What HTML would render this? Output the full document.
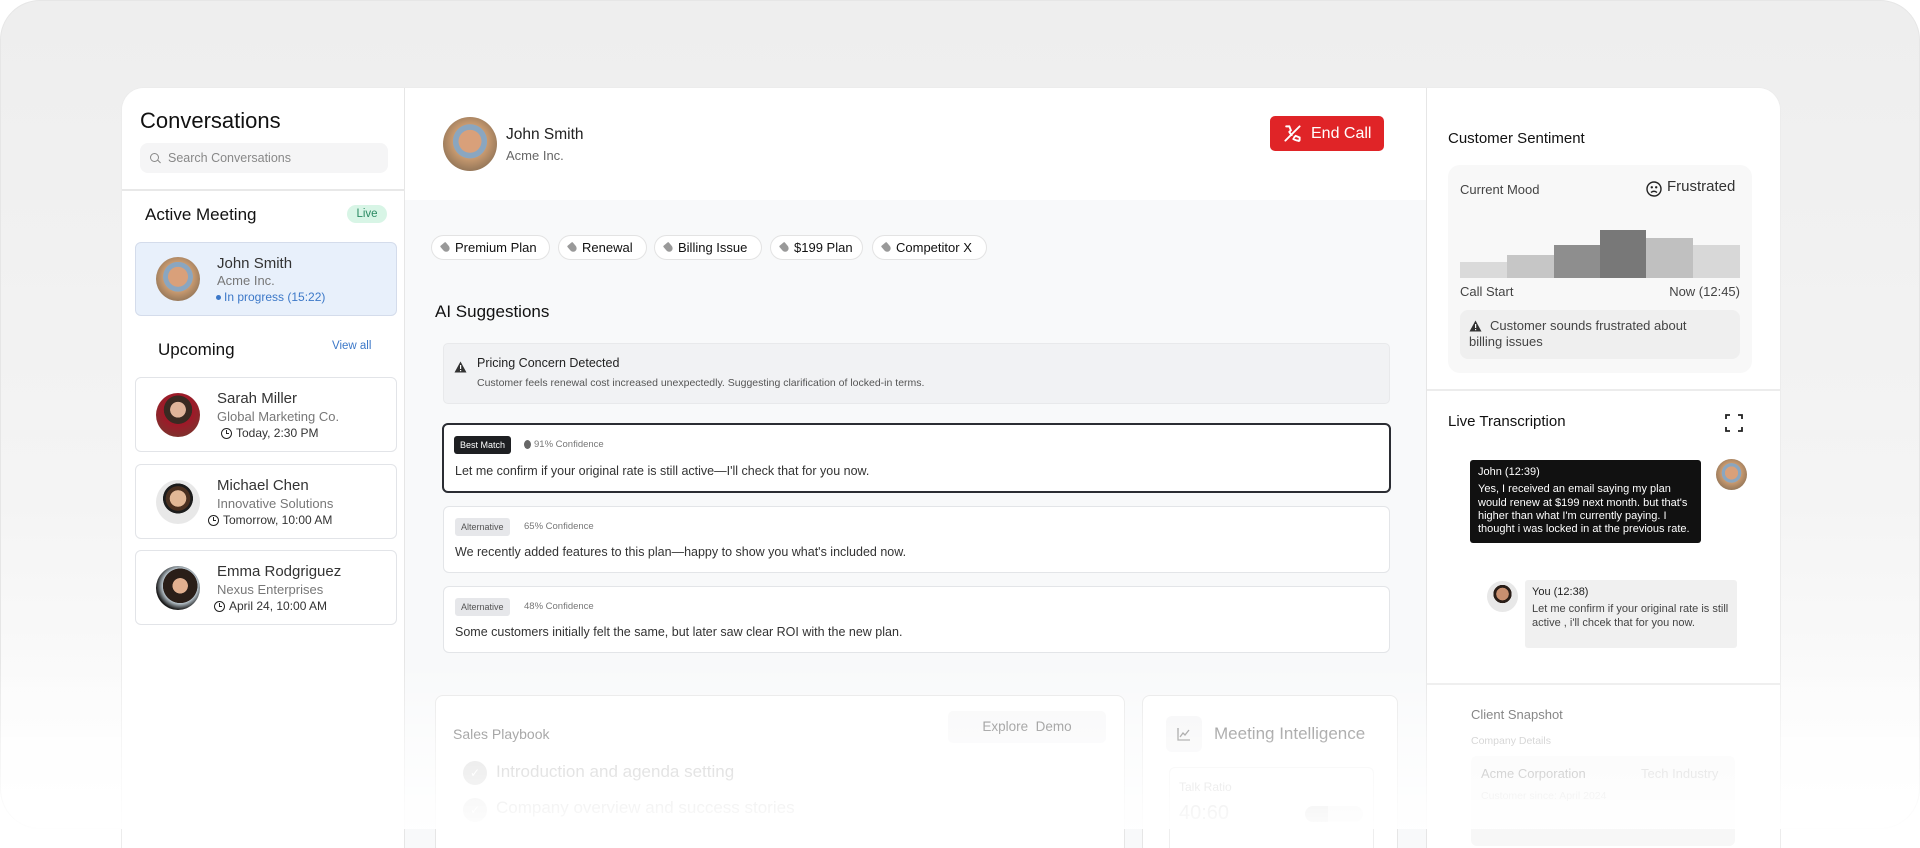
<!DOCTYPE html>
<html><head><meta charset="utf-8"><style>
*{box-sizing:border-box;margin:0;padding:0}
body{width:1920px;height:829px;overflow:hidden;background:#fff;font-family:"Liberation Sans",Arial,sans-serif;color:#111;position:relative}
.frame{position:absolute;left:0;top:0;width:1920px;height:829px;border-radius:40px;border:1px solid #e6e6e6;background:linear-gradient(#eeeeee 0,#f4f4f4 60%,#ffffff 100%)}
.app{position:absolute;left:122px;top:88px;width:1658px;height:760px;background:#fff;border-radius:22px 22px 0 0;overflow:hidden;box-shadow:0 0 0 1px #ececec}
.abs{position:absolute}
.side{left:0;top:0;width:283px;height:760px;border-right:1px solid #e6e6e6;background:#fff}
.center{left:283px;top:0;width:1021px;height:760px;background:#f8f9fa;overflow:hidden}
.right{left:1304px;top:0;width:354px;height:760px;border-left:1px solid #e6e6e6;background:#fff}
.card{position:absolute;left:13px;width:262px;border:1.5px solid #e2e4e8;border-radius:6px;background:#fff}
.av{position:absolute;border-radius:50%}
.nm{position:absolute;left:81px;font-size:15px;color:#333}
.co{position:absolute;left:81px;font-size:13px;color:#777}
.tm{position:absolute;font-size:12px;color:#333;display:flex;align-items:center;gap:4px}
.clk{width:11px;height:11px;border:1.5px solid #222;border-radius:50%;position:relative;display:inline-block}
.clk:after{content:"";position:absolute;left:3.5px;top:1px;width:2.5px;height:3px;border-left:1.5px solid #222;border-bottom:1.5px solid #222}
.tag{position:absolute;top:147px;height:25px;border:1px solid #e3e3e3;border-radius:13px;background:#fff;font-size:13px;color:#111;display:flex;align-items:center;padding-left:10px;gap:6px;white-space:nowrap}
.tag i{width:7px;height:9px;background:#999;border-radius:1px 1px 4px 4px;transform:rotate(-40deg);display:inline-block}
.sug{position:absolute;left:38px;width:947px;background:#fff;border:1.5px solid #e3e5e8;border-radius:6px}
.badge{position:absolute;left:12px;top:13px;height:18px;padding:0 6px;font-size:9px;line-height:18px;border-radius:3px;background:#e6e7ea;color:#555}
.conf{position:absolute;top:16px;font-size:9.5px;color:#777}
.stx{position:absolute;left:12px;font-size:12.5px;color:#333}
</style></head><body>
<div class="frame"></div>
<div class="app">
 <div class="abs side">
  <div class="abs" style="left:18px;top:20px;font-size:22px;color:#111">Conversations</div>
  <div class="abs" style="left:18px;top:55px;width:248px;height:30px;background:#f5f5f6;border-radius:8px">
   <div class="abs" style="left:10px;top:10px;width:9px;height:9px;border:1.4px solid #888;border-radius:50%"></div>
   <div class="abs" style="left:17px;top:18px;width:4px;height:1.4px;background:#888;transform:rotate(45deg)"></div>
   <div class="abs" style="left:28px;top:8px;font-size:12.5px;color:#888">Search Conversations</div>
  </div>
  <div class="abs" style="left:0;top:101px;width:283px;height:2px;background:#e8e8e8"></div>
  <div class="abs" style="left:23px;top:117px;font-size:17px;color:#111">Active Meeting</div>
  <div class="abs" style="left:225px;top:117px;width:40px;height:18px;border-radius:9px;background:#d8f5e6;color:#2b8a63;font-size:11.5px;text-align:center;line-height:18px">Live</div>
  <div class="card" style="top:154px;height:74px;background:#e8f0fb;border-color:#d4dceb">
   <div class="av" style="left:20px;top:14px;width:44px;height:44px;background:radial-gradient(circle at 50% 45%,#d9a07a 0 30%,#8aa6c0 31% 45%,#c89a70 46%,#6b5a46 100%)"></div>
   <div class="nm" style="top:12px">John Smith</div>
   <div class="co" style="top:30px">Acme Inc.</div>
   <div class="abs" style="left:80px;top:52px;width:5px;height:5px;border-radius:50%;background:#3c78c8"></div>
   <div class="abs" style="left:88px;top:47px;font-size:12px;color:#3c78c8">In progress (15:22)</div>
  </div>
  <div class="abs" style="left:36px;top:252px;font-size:17px;color:#111">Upcoming</div>
  <div class="abs" style="left:210px;top:252px;font-size:11.5px;color:#3c78c8">View all</div>
  <div class="card" style="top:289px;height:75px">
   <div class="av" style="left:20px;top:15px;width:44px;height:44px;background:radial-gradient(circle at 50% 38%,#e0b49a 0 22%,#3a2a22 23% 40%,#a01828 41%,#6a4030 100%)"></div>
   <div class="nm" style="top:12px">Sarah Miller</div>
   <div class="co" style="top:31px">Global Marketing Co.</div>
   <div class="tm" style="left:85px;top:48px"><span class="clk"></span>Today, 2:30 PM</div>
  </div>
  <div class="card" style="top:376px;height:75px">
   <div class="av" style="left:20px;top:15px;width:44px;height:44px;background:radial-gradient(circle at 50% 42%,#e2b896 0 24%,#4a3020 25% 36%,#1c1c1c 37% 44%,#e8e8e8 45%)"></div>
   <div class="nm" style="top:12px">Michael Chen</div>
   <div class="co" style="top:31px">Innovative Solutions</div>
   <div class="tm" style="left:72px;top:48px"><span class="clk"></span>Tomorrow, 10:00 AM</div>
  </div>
  <div class="card" style="top:462px;height:75px">
   <div class="av" style="left:20px;top:15px;width:44px;height:44px;background:radial-gradient(circle at 55% 45%,#e2b090 0 22%,#2a1e18 23% 50%,#b8c4cc 51%,#1a1a1a 70%)"></div>
   <div class="nm" style="top:12px">Emma Rodgriguez</div>
   <div class="co" style="top:31px">Nexus Enterprises</div>
   <div class="tm" style="left:78px;top:48px"><span class="clk"></span>April 24, 10:00 AM</div>
  </div>
 </div>

 <div class="abs center">
  <div class="abs" style="left:0;top:0;width:1021px;height:112px;background:#fff"></div>
  <div class="av" style="left:38px;top:29px;width:54px;height:54px;background:radial-gradient(circle at 50% 45%,#d9a07a 0 28%,#8aa6c0 29% 42%,#c89a70 43%,#6b5a46 100%)"></div>
  <div class="abs" style="left:101px;top:38px;font-size:15.5px;color:#222">John Smith</div>
  <div class="abs" style="left:101px;top:60px;font-size:13px;color:#666">Acme Inc.</div>
  <div class="abs" style="left:865px;top:28px;width:114px;height:35px;background:#e02427;border-radius:5px;color:#fff;font-size:16px;line-height:35px;padding-left:41px">End Call
   <svg class="abs" style="left:13px;top:8px" width="19" height="19" viewBox="0 0 24 24" fill="none" stroke="#fff" stroke-width="2.4" stroke-linecap="round"><path d="M4 3l4 0 2 5-2 2c1 2 2 3 3 4"/><path d="M14 17l2-2 5 2v3c0 1-1 2-2 1-2 0-4-1-6-2"/><path d="M21 3L3 21"/></svg>
  </div>
  <div class="tag" style="left:26px;width:119px"><i></i>Premium Plan</div>
  <div class="tag" style="left:153px;width:89px"><i></i>Renewal</div>
  <div class="tag" style="left:249px;width:108px"><i></i>Billing Issue</div>
  <div class="tag" style="left:365px;width:93px"><i></i>$199 Plan</div>
  <div class="tag" style="left:467px;width:115px"><i></i>Competitor X</div>
  <div class="abs" style="left:30px;top:214px;font-size:17px;color:#111">AI Suggestions</div>
  <div class="abs" style="left:38px;top:255px;width:947px;height:61px;background:#f1f2f4;border:1px solid #e8e9eb;border-radius:5px">
   <svg class="abs" style="left:10px;top:17px" width="13" height="12" viewBox="0 0 13 12"><path d="M6.5 0.5L12.5 11.5H0.5Z" fill="#333"/><rect x="6" y="4" width="1.2" height="4" fill="#fff"/><rect x="6" y="9" width="1.2" height="1.2" fill="#fff"/></svg>
   <div class="abs" style="left:33px;top:12px;font-size:12.5px;color:#222">Pricing Concern Detected</div>
   <div class="abs" style="left:33px;top:33px;font-size:10.5px;color:#555">Customer feels renewal cost increased unexpectedly. Suggesting clarification of locked-in terms.</div>
  </div>
  <div class="sug" style="left:37px;top:335px;width:949px;height:70px;border:2px solid #2b2d33">
   <div class="badge" style="background:#1e1f22;color:#fff;left:10px;top:11px">Best Match</div>
   <div class="abs" style="left:80px;top:15px;width:7px;height:9px;border-radius:50%;background:#666"></div>
   <div class="conf" style="left:90px;top:14px">91% Confidence</div>
   <div class="stx" style="left:11px;top:39px">Let me confirm if your original rate is still active—I'll check that for you now.</div>
  </div>
  <div class="sug" style="top:418px;height:67px">
   <div class="badge" style="left:11px;top:11px">Alternative</div>
   <div class="conf" style="left:80px;top:14px">65% Confidence</div>
   <div class="stx" style="left:11px;top:38px">We recently added features to this plan—happy to show you what's included now.</div>
  </div>
  <div class="sug" style="top:498px;height:67px">
   <div class="badge" style="left:11px;top:11px">Alternative</div>
   <div class="conf" style="left:80px;top:14px">48% Confidence</div>
   <div class="stx" style="left:11px;top:38px">Some customers initially felt the same, but later saw clear ROI with the new plan.</div>
  </div>
  <div class="abs" style="left:30px;top:607px;width:690px;height:160px;background:#fff;border:1.5px solid #e6e6e6;border-radius:8px">
   <div class="abs" style="left:17px;top:30px;font-size:14px;color:#555">Sales Playbook</div>
   <div class="abs" style="left:512px;top:15px;width:158px;height:32px;background:#f7f7f8;border-radius:5px;font-size:13.5px;color:#666;text-align:center;line-height:32px">Explore&nbsp; Demo</div>
   <div class="abs" style="left:27px;top:65px;width:24px;height:24px;border-radius:50%;background:#d0d0d0;color:#fff;font-size:12px;text-align:center;line-height:24px">✓</div>
   <div class="abs" style="left:60px;top:66px;font-size:17px;color:#aaa">Introduction and agenda setting</div>
   <div class="abs" style="left:27px;top:102px;width:24px;height:24px;border-radius:50%;background:#ddd;color:#fff;font-size:12px;text-align:center;line-height:24px">✓</div>
   <div class="abs" style="left:60px;top:102px;font-size:17px;color:#bbb">Company overview and success stories</div>
  </div>
  <div class="abs" style="left:737px;top:607px;width:256px;height:160px;background:#fff;border:1.5px solid #e6e6e6;border-radius:8px">
   <div class="abs" style="left:23px;top:20px;width:36px;height:36px;background:#f4f4f5;border-radius:6px"></div>
   <svg class="abs" style="left:33px;top:30px" width="16" height="16" viewBox="0 0 16 16" fill="none" stroke="#666" stroke-width="1.3"><path d="M2 2v12h12"/><path d="M4 11l3-4 2 2 4-5"/></svg>
   <div class="abs" style="left:71px;top:28px;font-size:17px;color:#666;white-space:nowrap">Meeting Intelligence</div>
   <div class="abs" style="left:26px;top:71px;width:205px;height:90px;border:1.5px solid #eee;border-radius:6px">
    <div class="abs" style="left:9px;top:12px;font-size:12px;color:#bbb">Talk Ratio</div>
    <div class="abs" style="left:9px;top:34px;font-size:20px;color:#bbb">40:60</div>
    <div class="abs" style="left:135px;top:38px;width:58px;height:16px;border-radius:8px;background:linear-gradient(90deg,#ccc 40%,#eee 40%)"></div>
   </div>
  </div>
 </div>

 <div class="abs right">
  <div class="abs" style="left:21px;top:42px;font-size:15px;color:#111">Customer Sentiment</div>
  <div class="abs" style="left:21px;top:77px;width:304px;height:208px;background:#f8f8f8;border-radius:12px">
   <div class="abs" style="left:12px;top:17px;font-size:13px;color:#444">Current Mood</div>
   <svg class="abs" style="left:198px;top:16px" width="16" height="16" viewBox="0 0 16 16" fill="none" stroke="#222" stroke-width="1.4"><circle cx="8" cy="8" r="7"/><circle cx="5.8" cy="6.3" r=".5" fill="#222"/><circle cx="10.2" cy="6.3" r=".5" fill="#222"/><path d="M5 11.5q3-2.5 6 0"/></svg>
   <div class="abs" style="left:219px;top:13px;font-size:15px;color:#333">Frustrated</div>
   <div class="abs" style="left:12px;top:97px;width:47px;height:16px;background:#dadada"></div>
   <div class="abs" style="left:59px;top:90px;width:47px;height:23px;background:#c6c6c6"></div>
   <div class="abs" style="left:106px;top:80px;width:46px;height:33px;background:#8e8e8e"></div>
   <div class="abs" style="left:152px;top:65px;width:46px;height:48px;background:#787878"></div>
   <div class="abs" style="left:198px;top:73px;width:47px;height:40px;background:#c0c0c0"></div>
   <div class="abs" style="left:245px;top:80px;width:47px;height:33px;background:#d8d8d8"></div>
   <div class="abs" style="left:12px;top:119px;font-size:13px;color:#444">Call Start</div>
   <div class="abs" style="right:12px;top:119px;font-size:13px;color:#444">Now (12:45)</div>
   <div class="abs" style="left:12px;top:145px;width:280px;height:49px;background:#efefef;border-radius:8px">
    <svg class="abs" style="left:9px;top:10px" width="13" height="12" viewBox="0 0 13 12"><path d="M6.5 0.5L12.5 11.5H0.5Z" fill="#333"/><rect x="6" y="4" width="1.2" height="4" fill="#fff"/><rect x="6" y="9" width="1.2" height="1.2" fill="#fff"/></svg>
    <div class="abs" style="left:9px;top:8px;width:250px;font-size:13px;color:#444;line-height:16px;text-indent:21px">Customer sounds frustrated about billing issues</div>
   </div>
  </div>
  <div class="abs" style="left:0;top:301px;width:354px;height:2px;background:#ececec"></div>
  <div class="abs" style="left:21px;top:325px;font-size:15px;color:#111">Live Transcription</div>
  <svg class="abs" style="left:298px;top:326px" width="18" height="18" viewBox="0 0 18 18" fill="none" stroke="#222" stroke-width="1.8"><path d="M1 5V1h4M13 1h4v4M17 13v4h-4M5 17H1v-4"/></svg>
  <div class="abs" style="left:43px;top:372px;width:231px;height:83px;background:#111;border-radius:3px;color:#fff;padding:6px 8px;font-size:11px;line-height:13.3px">
   <div style="margin-bottom:4px">John (12:39)</div>
   Yes, I received an email saying my plan would renew at $199 next month. but that's higher than what I'm currently paying. I thought i was locked in at the previous rate.
  </div>
  <div class="av" style="left:289px;top:371px;width:31px;height:31px;background:radial-gradient(circle at 50% 45%,#d9a07a 0 28%,#8aa6c0 29% 42%,#c89a70 43%,#6b5a46 100%)"></div>
  <div class="av" style="left:60px;top:493px;width:31px;height:31px;background:radial-gradient(circle at 50% 42%,#c99070 0 26%,#2a1e18 27% 38%,#e8e8e8 39%)"></div>
  <div class="abs" style="left:98px;top:492px;width:212px;height:68px;background:#f0f0f0;border-radius:3px;padding:6px 7px;font-size:11px;line-height:13.3px;color:#444">
   <div style="color:#222;margin-bottom:4px">You (12:38)</div>
   Let me confirm if your original rate is still active , i'll chcek that for you now.
  </div>
  <div class="abs" style="left:0;top:595px;width:354px;height:2px;background:#ececec"></div>
  <div class="abs" style="left:44px;top:619px;font-size:13px;color:#444">Client Snapshot</div>
  <div class="abs" style="left:44px;top:647px;font-size:10.5px;color:#aaa">Company Details</div>
  <div class="abs" style="left:44px;top:668px;width:264px;height:90px;background:#f7f7f7;border-radius:6px">
   <div class="abs" style="left:10px;top:10px;font-size:13px;color:#777">Acme Corporation</div>
   <div class="abs" style="left:170px;top:10px;font-size:13px;color:#bbb">Tech Industry</div>
   <div class="abs" style="left:10px;top:34px;font-size:10.5px;color:#ccc">Customer since: April 2024</div>
  </div>
 </div>
</div>
<div class="abs" style="left:0;top:660px;width:1920px;height:169px;background:linear-gradient(rgba(255,255,255,0),rgba(255,255,255,0.55) 50%,rgba(255,255,255,0.95));pointer-events:none"></div>
</body></html>
